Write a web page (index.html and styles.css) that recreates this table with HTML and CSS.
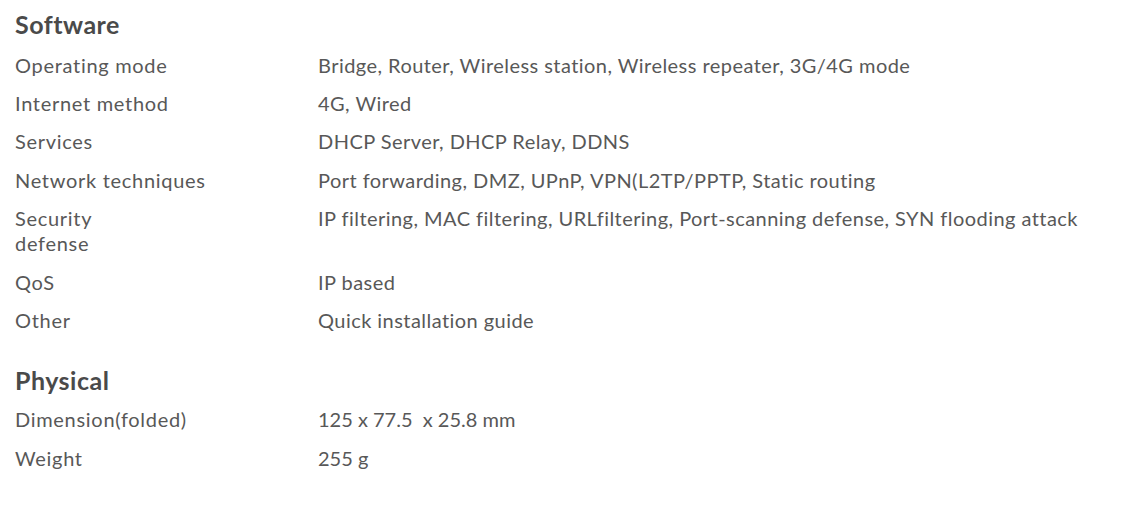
FILE: index.html
```html
<!DOCTYPE html>
<html>
<head>
<meta charset="utf-8">
<link rel="stylesheet" href="styles.css">
</head>
<body>
<section class="spec">
  <h2 class="spec-title">Software</h2>
  <dl class="spec-list">
    <dt>Operating mode</dt><dd>Bridge, Router, Wireless station, Wireless repeater, 3G/4G mode</dd>
    <dt>Internet method</dt><dd>4G, Wired</dd>
    <dt>Services</dt><dd>DHCP Server, DHCP Relay, DDNS</dd>
    <dt>Network techniques</dt><dd>Port forwarding, DMZ, UPnP, VPN(L2TP/PPTP, Static routing</dd>
    <dt class="narrow">Security defense</dt><dd>IP filtering, MAC filtering, URLfiltering, Port-scanning defense, SYN flooding attack</dd>
    <dt>QoS</dt><dd>IP based</dd>
    <dt>Other</dt><dd>Quick installation guide</dd>
  </dl>
</section>
<section class="spec spec-second">
  <h2 class="spec-title">Physical</h2>
  <dl class="spec-list spec-list-second">
    <dt>Dimension(folded)</dt><dd class="numeric">125 x 77.5&nbsp; x 25.8 mm</dd>
    <dt>Weight</dt><dd class="numeric">255 g</dd>
  </dl>
</section>
</body>
</html>
```
FILE: styles.css
```css
html, body {
  margin: 0;
  padding: 0;
  background: #ffffff;
}
body {
  padding: 9px 15px 0;
  font-family: Lato, "Open Sans", sans-serif;
  color: #585858;
  font-variant-ligatures: none;
}
.spec {
  display: flex;
  flex-direction: column;
  gap: 13.5px;
}
.spec-second {
  margin-top: 32px;
  gap: 12px;
}
.spec-title {
  margin: 0;
  font-size: 25px;
  line-height: 30px;
  font-weight: 700;
  letter-spacing: 0.5px;
  color: #4a4a4a;
}
.spec-list {
  margin: 0;
  display: grid;
  grid-template-columns: 303px 1fr;
  row-gap: 13.45px;
  font-size: 20px;
  line-height: 25px;
  letter-spacing: 0.45px;
}
.spec-list-second {
  row-gap: 14px;
}
.spec-list dt,
.spec-list dd {
  margin: 0;
}
.spec-list dt {
  letter-spacing: 0.7px;
}
.spec-list dd.numeric {
  letter-spacing: 0;
}
.spec-list dt.narrow {
  max-width: 100px;
}
```
